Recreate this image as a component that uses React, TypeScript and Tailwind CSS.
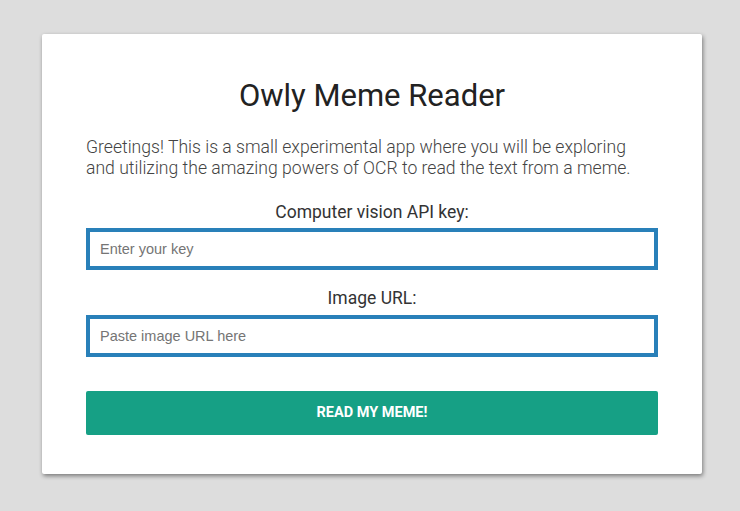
export default function App() {
  return (
    <div className="min-h-[511px] bg-[#dddddd] pt-[34px] font-['Roboto',sans-serif]">
      <div className="ml-[42px] flex w-[660px] flex-col rounded-[2px] bg-white px-[44px] pb-[39px] pt-[44px] shadow-[1px_2px_4px_rgba(0,0,0,0.45)]">
        <h1 className="text-center text-[31px] leading-[36px] font-normal text-[#222222]">
          Owly Meme Reader
        </h1>
        <p className="mt-[23px] text-[17.6px] leading-[21px] font-light text-[#444444]">
          Greetings! This is a small experimental app where you will be exploring
          and utilizing the amazing powers of OCR to read the text from a meme.
        </p>

        <label className="mt-[23px] text-center text-[17.5px] leading-[20px] text-[#333333]">
          Computer vision API key:
        </label>
        <input
          className="mt-[6px] h-[42px] w-full border-[4px] border-[#2980b9] px-[10px] font-['Liberation_Sans',sans-serif] text-[14.5px] text-[#333] outline-none placeholder:text-[#757575]"
          placeholder="Enter your key"
          type="text"
        />

        <label className="mt-[18px] text-center text-[17.5px] leading-[20px] text-[#333333]">
          Image URL:
        </label>
        <input
          className="mt-[7px] h-[42px] w-full border-[4px] border-[#2980b9] px-[10px] font-['Liberation_Sans',sans-serif] text-[14.5px] text-[#333] outline-none placeholder:text-[#757575]"
          placeholder="Paste image URL here"
          type="text"
        />

        <button className="mt-[34px] h-[44px] w-full rounded-[2px] bg-[#16a085] text-[14.5px] font-bold uppercase text-white">
          Read my meme!
        </button>
      </div>
    </div>
  );
}
